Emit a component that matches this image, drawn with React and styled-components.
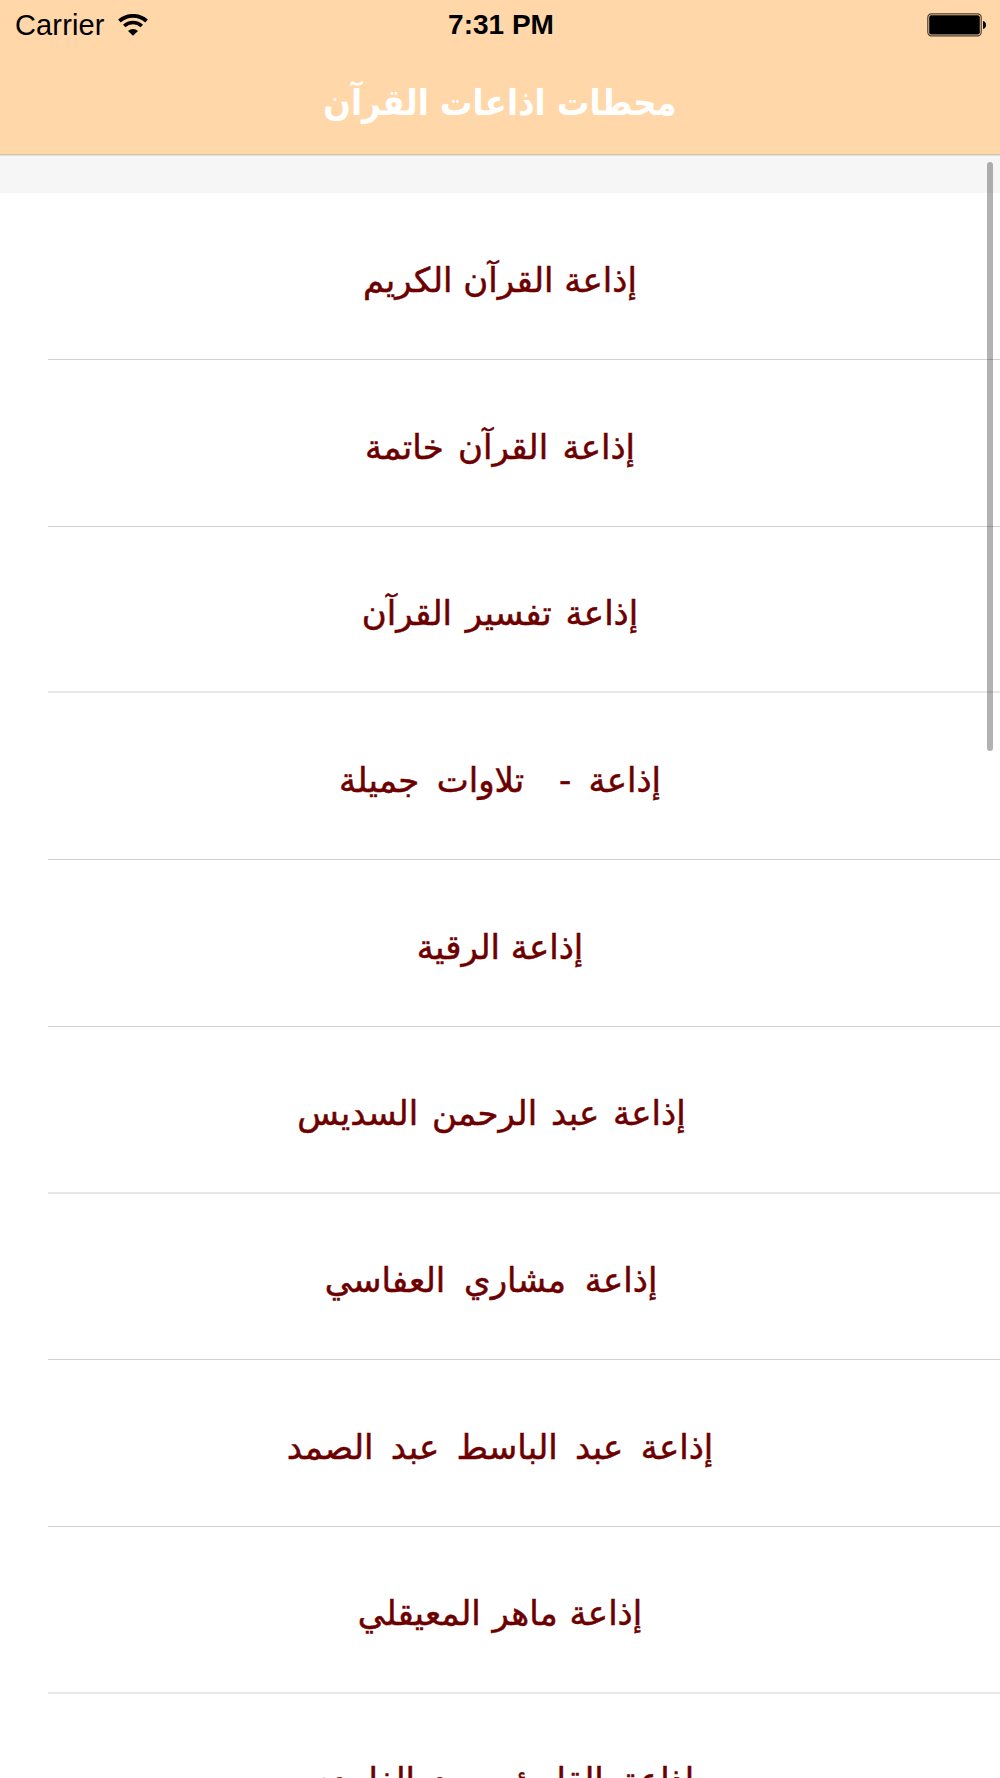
import React from 'react';
import styled, { createGlobalStyle } from 'styled-components';

const stations = [
    { name: 'إذاعة القرآن الكريم', space: 0 },
    { name: 'إذاعة القرآن خاتمة', space: 3.5 },
    { name: 'إذاعة تفسير القرآن', space: 3, soft: true },
    { name: 'إذاعة -  تلاوات جميلة', space: 6.5 },
    { name: 'إذاعة الرقية', space: 0 },
    { name: 'إذاعة عبد الرحمن السديس', space: 3, pad: 17, soft: true },
    { name: 'إذاعة مشاري العفاسي', space: 8, pad: 18 },
    { name: 'إذاعة عبد الباسط عبد الصمد', space: 6.5 },
    { name: 'إذاعة ماهر المعيقلي', space: 1, soft: true },
    { name: 'إذاعة القارئ سعد الغامدي', space: 7 },
];

export default function App() {
    return (
        <Screen>
            <GlobalStyle />
            <Header>
                <StatusBar>
                    <Carrier>
                        Carrier
                        <WifiIcon />
                    </Carrier>
                    <Clock>7:31 PM</Clock>
                    <BatteryBox>
                        <BatteryIcon />
                    </BatteryBox>
                </StatusBar>
                <Title>محطات اذاعات القرآن</Title>
            </Header>
            <SectionGap />
            <List>
                {stations.map((s) => (
                    <Row key={s.name} $pad={s.pad} $soft={s.soft}>
                        <Name $space={s.space}>{s.name}</Name>
                    </Row>
                ))}
            </List>
            <ScrollThumb />
        </Screen>
    )
}

function WifiIcon() {
    return (
        <svg width="30" height="22" viewBox="0 0 30 22" fill="none" stroke="#000">
            <path d="M1.4 7 A20.5 20.5 0 0 1 28.6 7" strokeWidth="3.8" />
            <path d="M6.2 12 A13 13 0 0 1 23.8 12" strokeWidth="3.6" />
            <path d="M15 21.8 L10 17 A7.4 7.4 0 0 1 20 17 Z" fill="#000" stroke="none" />
        </svg>
    )
}

function BatteryIcon() {
    return (
        <svg width="60" height="24" viewBox="0 0 60 24">
            <rect x="0.8" y="0.8" width="53.4" height="22" rx="3.6" fill="none" stroke="#000" strokeOpacity="0.7" strokeWidth="1.2" />
            <rect x="2.2" y="2.2" width="50.6" height="19.2" rx="2" fill="#000" />
            <path d="M56 8 C60 8.5 60 15.5 56 16 Z" fill="#000" />
        </svg>
    )
}

const GlobalStyle = createGlobalStyle`
    body {
        margin: 0;
        background: #fff;
    }
`
const Screen = styled.div`
    position: relative;
    width: 1000px;
    height: 1778px;
    overflow: hidden;
    background: #fff;
    font-family: 'Liberation Sans', sans-serif;
`
const Header = styled.div`
    box-sizing: border-box;
    height: 155px;
    background: #ffd7a8;
    border-bottom: 1px solid #d5c3ac;
`
const StatusBar = styled.div`
    display: grid;
    grid-template-columns: 1fr auto 1fr;
    align-items: center;
    height: 50px;
    padding: 0 13px 0 15px;
    font-size: 29px;
    color: #000;
`
const Carrier = styled.div`
    display: flex;
    align-items: center;
    gap: 13px;
    letter-spacing: 0.15px;
`
const Clock = styled.div`
    font-size: 28px;
    font-weight: bold;
`
const BatteryBox = styled.div`
    display: flex;
    justify-content: flex-end;
`
const Title = styled.div`
    direction: rtl;
    text-align: center;
    font-family: 'DejaVu Sans Condensed', 'DejaVu Sans', sans-serif;
    font-weight: bold;
    font-size: 36px;
    line-height: 106px;
    color: #fff;
`
const SectionGap = styled.div`
    box-sizing: border-box;
    height: 38.4px;
    background: #f6f6f6;
    border-top: 1px solid #e3e0dc;
`
const List = styled.div`
    display: flex;
    flex-direction: column;
`
const Row = styled.div`
    box-sizing: border-box;
    display: flex;
    flex: none;
    align-items: center;
    justify-content: center;
    height: 166.7px;
    margin-left: 48px;
    padding-top: 8px;
    padding-right: ${(p) => 48 + (p.$pad || 0)}px;
    border-bottom: ${(p) => (p.$soft ? '2px solid #e8e8e8' : '1px solid #d2d2d2')};
`
const Name = styled.div`
    direction: rtl;
    white-space: pre;
    font-family: 'DejaVu Sans', sans-serif;
    font-size: 34px;
    word-spacing: ${(p) => p.$space || 0}px;
    color: #6c0000;
    -webkit-text-stroke: 0.5px #6c0000;
`
const ScrollThumb = styled.div`
    position: absolute;
    top: 162px;
    left: 987px;
    width: 6px;
    height: 589px;
    border-radius: 3px;
    background: rgba(0, 0, 0, 0.3);
`
